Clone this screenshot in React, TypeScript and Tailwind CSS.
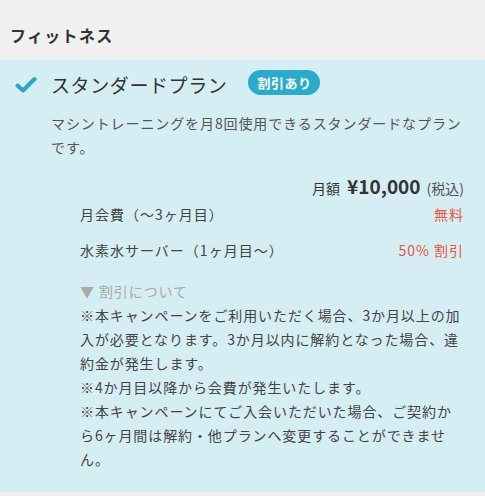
import React from 'react';

const font = { fontFamily: '"Noto Sans CJK JP", "Noto Sans", sans-serif' };

const notes = [
  '※本キャンペーンをご利用いただく場合、3か月以上の加入が必要となります。3か月以内に解約となった場合、違約金が発生します。',
  '※4か月目以降から会費が発生いたします。',
  '※本キャンペーンにてご入会いただいた場合、ご契約から6ヶ月間は解約・他プランへ変更することができません。',
];

const Row: React.FC<{ label: string; value: string; className?: string }> = ({ label, value, className = '' }) => (
  <div
    className={`flex justify-between border-b border-dotted border-[#d6dfe2] pb-[2px] text-[14px] leading-[20px] tracking-[1px] ${className}`}
  >
    <span className="text-[#444]">{label}</span>
    <span className="text-[#ec5540]">{value}</span>
  </div>
);

export default function App() {
  return (
    <div className="min-h-[496px] w-[485px] bg-[#f0f0f0]" style={font}>
      {/* Category header */}
      <div className="h-[60px] px-[10px] pt-[25px]">
        <h2 className="text-[16px] font-bold leading-[20px] tracking-[1.3px] text-[#333]">フィットネス</h2>
      </div>

      {/* Plan card */}
      <div className="bg-[#d4eef4] pb-[21px] pl-[15px] pr-[21px] pt-[10px]">
        <div className="flex h-[25px] items-center">
          <svg width="22" height="18" viewBox="0 0 22 18" className="mr-[14px] mt-[4px]">
            <path d="M2.5 9.5 L8 14.5 L19.5 3" fill="none" stroke="#2aa8c8" strokeWidth="4" strokeLinecap="round" strokeLinejoin="round" />
          </svg>
          <span className="mt-[3px] text-[19px] leading-[25px] tracking-[0.6px] text-[#333]">スタンダードプラン</span>
          <span className="ml-[21px] flex h-[25px] items-center rounded-full bg-[#29accb] px-[9px] text-[13px] font-bold tracking-[0.5px] text-white">
            割引あり
          </span>
        </div>

        <p className="mt-[16px] pl-[36px] text-[14px] leading-[24px] tracking-[0.9px] text-[#555]">
          マシントレーニングを月8回使用できるスタンダードなプランです。
        </p>

        <div className="pl-[65px]">
          <div className="mt-[17px] flex items-baseline justify-end leading-[20px] text-[#333]">
            <span className="text-[14px]">月額</span>
            <span className="ml-[7px] text-[19px] font-bold">¥10,000</span>
            <span className="ml-[6px] text-[14px] text-[#555]">(税込)</span>
          </div>

          <Row label="月会費（～3ヶ月目）" value="無料" className="pt-[6px]" />
          <Row label="水素水サーバー（1ヶ月目～）" value="50% 割引" className="pt-[13px]" />

          <div className="mt-[16px] text-[14px] leading-[24px] tracking-[0.9px]">
            <p className="text-[#a9a9a9]">▼ 割引について</p>
            {notes.map((n, i) => (
              <p key={i} className="text-[#444]">
                {n}
              </p>
            ))}
          </div>
        </div>
      </div>
    </div>
  );
}
